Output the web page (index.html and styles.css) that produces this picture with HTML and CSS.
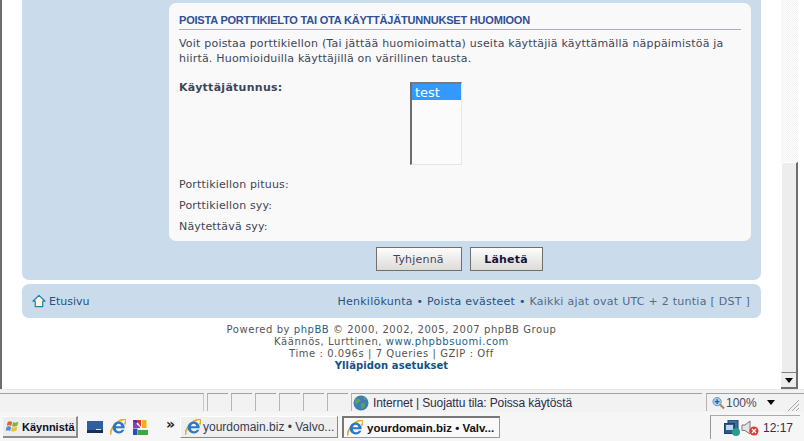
FILE: index.html
```html
<!DOCTYPE html>
<html lang="fi">
<head>
<meta charset="utf-8">
<title>Poista porttikielto</title>
<link rel="stylesheet" href="styles.css">
</head>
<body>
<svg class="defs" width="0" height="0" aria-hidden="true">
  <symbol id="ie" viewBox="1 1 16 16">
    <path d="M2 16.500C.8 15 2.500 10 6.500 6 10.500 2 15.500.3 16.600 1.600c.8 1 .2 3-1.200 5" fill="none" stroke="#e3ac2c" stroke-width="1.800"/>
    <path d="M9.600 3.600a6 6 0 0 1 6 6.600H6.900c.1 1.900 1.400 3 3 3 1.200 0 2.200-.5 2.900-1.500h2.600c-1 2.400-3 3.800-5.600 3.800A6 6 0 0 1 3.600 9.600a6 6 0 0 1 6-6zM7 8.300h5.300c-.1-1.500-1.200-2.500-2.600-2.500S7.200 6.800 7 8.300z" fill="#2a78cc" fill-rule="evenodd"/>
  </symbol>
</svg>
<div class="browser">
  <div class="viewport">
    <main class="page">
      <section class="panel">
        <form class="card">
          <h2 class="card-title">POISTA PORTTIKIELTO TAI OTA KÄYTTÄJÄTUNNUKSET HUOMIOON</h2>
          <p class="intro">Voit poistaa porttikiellon (Tai jättää huomioimatta) useita käyttäjiä käyttämällä näppäimistöä ja hiirtä. Huomioiduilla käyttäjillä on värillinen tausta.</p>
          <div class="user-row">
            <strong class="user-label">Käyttäjätunnus:</strong>
            <div class="listbox"><div class="option">test</div></div>
          </div>
          <div class="rows">
            <div class="row">Porttikiellon pituus:</div>
            <div class="row">Porttikiellon syy:</div>
            <div class="row">Näytettävä syy:</div>
          </div>
        </form>
        <div class="actions">
          <button type="button" class="btn btn-reset">Tyhjennä</button>
          <button type="button" class="btn btn-send">Lähetä</button>
        </div>
      </section>
      <nav class="navbar">
        <a class="home">
          <svg class="home-icon" viewBox="0 0 15 14"><path d="M7.500 1 14 7.200h-2.500V13h-8V7.200H1z" fill="#fbf3dc" stroke="#1f7fae" stroke-width="1.300" stroke-linejoin="round"/></svg>
          Etusivu
        </a>
        <div class="nav-links"><a>Henkilökunta</a> <b class="dot">•</b> <a>Poista evästeet</a> <b class="dot">•</b> <span class="tz">Kaikki ajat ovat UTC + 2 tuntia [ DST ]</span></div>
      </nav>
      <footer class="copy">
        <div>Powered by <a>phpBB</a> © 2000, 2002, 2005, 2007 phpBB Group</div>
        <div>Käännös, Lurttinen, <a>www.phpbbsuomi.com</a></div>
        <div>Time : 0.096s | 7 Queries | GZIP : Off</div>
        <div><a class="admin">Ylläpidon asetukset</a></div>
      </footer>
    </main>
    <div class="scrollbar">
      <div class="track"></div>
      <div class="thumb"></div>
      <div class="scroll-down"><span class="arrow"></span></div>
    </div>
  </div>
  <div class="status">
    <div class="cell cell-main"></div>
    <div class="cell cell-s"></div>
    <div class="cell cell-s"></div>
    <div class="cell cell-s"></div>
    <div class="cell cell-s"></div>
    <div class="cell cell-s"></div>
    <div class="cell cell-s"></div>
    <div class="cell cell-zone">
      <svg class="globe" viewBox="0 0 16 16"><circle cx="8" cy="8" r="7.500" fill="#3d7fb5"/><path d="M3 3.500c2 0 3 1 4.500 1 .5 1.500-1 2.500-2.500 3-1 .5-.5 2-2 2C1.500 8 1.500 5 3 3.500zM9 8c2 0 3.500.5 3 2.500-.3 1.500-2 3-3 3.500-.5-1.500-1.500-3-1-4.500.2-.8.500-1.500 1-1.500zM10 2c1.500.3 3 1.500 3.500 3-1 .2-2 0-3-1-.5-.5-.8-1.500-.5-2z" fill="#5fa35a"/></svg>
      <span class="zone-text">Internet | Suojattu tila: Poissa käytöstä</span>
    </div>
    <div class="cell cell-zoom">
      <svg class="magnifier" viewBox="0 0 14 14"><path d="M8 8l5 5" stroke="#b08a58" stroke-width="2.400"/><circle cx="5.500" cy="5.500" r="4.500" fill="#a9cdea" stroke="#6e93b5"/><path d="M5.500 3v5M3 5.500h5" stroke="#1f5fa8" stroke-width="1.400"/></svg>
      <span class="zoom-value">100%</span>
      <span class="arrow"></span>
    </div>
    <svg class="grip" viewBox="0 0 13 13"><path d="M12 1 1 12M12 5 5 12M12 9 9 12" stroke="#a8a8a8" fill="none"/></svg>
  </div>
  <div class="taskbar">
    <button type="button" class="start">
      <svg class="flag" viewBox="0 0 18 16"><path d="M3 3c2-1.500 3.500-1 5 0L7 7.500C5.500 6.500 4 6.300 2 7.500z" fill="#e2622b"/><path d="M9 3c2 1 3.500 1 6-.5L14 7c-2.500 1.500-4 1.500-6 .5z" fill="#7fb63a"/><path d="M1.800 8.500c2-1.200 3.500-1 5 0l-1 4.500c-1.500-1-3-1-5 0z" fill="#3f8fd8"/><path d="M7.800 8.500c2 1 3.500 1 6-.5l-1 4.500c-2.500 1.500-4 1.500-6 .5z" fill="#f0c030"/></svg>
      <span>Käynnistä</span>
    </button>
    <div class="quick">
      <svg class="ql" viewBox="0 0 16 14"><rect width="16" height="12" y="1" fill="#2f5f9f"/><rect y="10" width="16" height="3" fill="#16305c"/><rect x="9" y="9" width="5" height="1" fill="#dce6f2"/></svg>
      <svg class="ql"><use href="#ie"/></svg>
      <svg class="ql ql-pic" viewBox="0 0 15 15"><path d="M0 0h7l-7 7z" fill="#3a3ac0"/><path d="M0 1l7 6v1H0z" fill="#8a3fb5"/><path d="M3 0h5v7z" fill="#d8322a"/><rect x="9" y="0" width="4.500" height="8" fill="#f2b01e"/><rect x="5" y="10" width="10" height="5" fill="#3aa83a"/><rect y="8.500" width="4.500" height="6.500" fill="#2a4cc8"/></svg>
    </div>
    <span class="chevron">»</span>
    <div class="task"><svg class="task-ie"><use href="#ie"/></svg><span>yourdomain.biz • Valvo...</span></div>
    <div class="task task-active"><svg class="task-ie"><use href="#ie"/></svg><span>yourdomain.biz • Valv...</span></div>
    <div class="tray">
      <svg class="tray-net" viewBox="0 0 16 16"><rect x="4" y="0" width="10" height="9" fill="#3e6f9e" stroke="#1e3f66"/><rect x="0.500" y="3.500" width="10" height="10" fill="#2d5b8c" stroke="#1e3f66"/><rect x="2" y="5" width="7" height="5" fill="#bcd8f0"/><circle cx="12" cy="12" r="4" fill="#2a9d8f"/></svg>
      <svg class="tray-vol" viewBox="0 0 18 16"><path d="M1 5h3l5-4v13L4 10.500H1z" fill="#e4e4e4" stroke="#7b7b7b"/><circle cx="13" cy="11" r="4.500" fill="#df3b34"/><path d="M11 9l4 4M15 9l-4 4" stroke="#fff" stroke-width="1.300"/></svg>
      <span class="clock">12:17</span>
    </div>
  </div>
</div>
</body>
</html>
```

FILE: styles.css
```css
* { box-sizing: border-box; }
html, body { margin: 0; height: 100%; }
body { background: #fff; overflow: hidden; font-family: "DejaVu Sans", sans-serif; }
.defs { position: absolute; }
.browser { width: 804px; height: 441px; display: flex; flex-direction: column; }

.viewport { height: 389px; display: flex; border-left: 2px solid #6d6d6d; flex: none; }
.page { width: 759px; padding-left: 20px; flex: none; overflow: hidden; }
.panel { width: 739px; height: 280px; padding: 3px 10px 0 147px; background: #cadceb; border-radius: 0 0 7px 7px; }
.card { height: 238px; padding: 10px 10px 0; background: #f9f9f9; border-radius: 7px; color: #3d4658; font-size: 11px; }
.card-title { margin: 0; height: 17px; font: bold 11px/15px "Liberation Sans", sans-serif; letter-spacing: -0.2px; color: #2f4f96; border-bottom: 1px solid #a9acc4; }
.intro { margin: 6px 0 0; width: 560px; line-height: 15px; letter-spacing: 0.2px; }
.user-row { margin-top: 16px; display: grid; grid-template-columns: 231px 52px; }
.user-label { line-height: 11px; letter-spacing: 0.27px; color: #3d4658; }
.listbox { height: 83px; border: 1px solid #e6e6e6; border-top: 2px solid #7a7a7a; border-left: 2px solid #6d6d6d; background: #fbfbfb; }
.option { height: 16px; padding-top: 1px; line-height: 16px; padding-left: 3px; background: #3399ff; color: #fff; font-size: 13px; width: 49px; }
.rows { margin-top: 9px; letter-spacing: 0.16px; }
.row { height: 21px; line-height: 21px; }

.actions { display: flex; justify-content: center; gap: 8px; margin-top: 6px; padding-right: 2px; }
.btn { height: 24px; border: 1px solid #6f6f6f; background: linear-gradient(#fdfdfd, #dcdbd8); font: 11px "DejaVu Sans", sans-serif; letter-spacing: 0.2px; color: #3d4658; padding: 0; }
.btn-reset { width: 86px; }
.btn-send { width: 73px; font-weight: bold; color: #16163a; }

.navbar { margin-top: 4px; width: 739px; height: 34px; padding: 0 11px 0 10px; background: #cadceb; border-radius: 7px; display: flex; justify-content: space-between; align-items: center; font-size: 11px; color: #27517f; }
.home { display: flex; align-items: center; gap: 3px; }
.home-icon { width: 14px; height: 14px; }
.nav-links { letter-spacing: 0.26px; }
.dot { color: #27517f; font-weight: normal; }
.tz { color: #536a85; }

.copy { width: 739px; margin-top: 6px; text-align: center; font-size: 10px; line-height: 12px; letter-spacing: 0.55px; color: #555; }
.copy a { color: #1d5f85; }
.copy .admin { font-weight: bold; color: #105289; letter-spacing: 0.1px; }

.scrollbar { margin-left: 20px; width: 17px; display: flex; flex-direction: column; flex: none; }
.track { height: 162px; flex: none; background: repeating-conic-gradient(#f1f1f1 0 25%, #fff 0 50%) 0 0 / 2px 2px; }
.thumb { height: 211px; flex: none; background: #ededed; border: 1px solid #fff; border-right: 2px solid #6f6f6f; border-bottom: 1px solid #808080; }
.scroll-down { height: 16px; display: flex; align-items: center; justify-content: center; background: #ededed; border-right: 2px solid #6f6f6f; border-bottom: 2px solid #6f6f6f; }
.arrow { display: block; width: 0; height: 0; border: 4px solid transparent; border-top: 5px solid #000; border-bottom: 0; }

.status { height: 23px; flex: none; display: flex; padding: 3px 0 0; gap: 3px; background: #f2f2f2; position: relative; border-top: 1px solid #e8e8e8; font: 12px "Liberation Sans", sans-serif; color: #2d2d4a; }
.cell { height: 18px; border-top: 1px solid #a0a0a0; border-left: 1px solid #b5b5b5; background: #f2f2f2; display: flex; align-items: center; }
.cell-main { width: 204px; border-left: 0; border-right: 1px solid #c8c8c8; }
.cell-s { width: 21px; }
.cell-zone { width: 351px; gap: 4px; padding-left: 1px; }
.zone-text { letter-spacing: -0.12px; }
.globe { width: 16px; height: 16px; }
.cell-zoom { width: 98px; margin-left: 1px; padding-left: 5px; }
.magnifier { width: 13px; height: 14px; flex: none; }
.zoom-value { margin-left: 1px; width: 41px; color: #4a4a60; }
.grip { position: absolute; right: 4px; bottom: 0; width: 13px; height: 13px; }

.taskbar { flex: 1; display: flex; align-items: center; padding: 1px 4px 0 3px; background: #f6f6f6; font: 12px "Liberation Sans", sans-serif; color: #222; }
.start { width: 75px; height: 22px; flex: none; display: flex; align-items: center; gap: 1px; padding: 0 0 0 2px; border: 0; border-right: 2px solid #8d8d8d; border-bottom: 2px solid #8d8d8d; border-top: 1px solid #fff; background: #ededed; font: bold 11px "Liberation Sans", sans-serif; color: #0c0c1c; }
.flag { width: 16px; height: 15px; flex: none; }
.quick { margin-left: 9px; display: flex; gap: 7px; align-items: center; width: 79px; flex: none; }
.ql { width: 16px; height: 16px; flex: none; }
.ql-pic { width: 15px; height: 15px; }
.chevron { width: 14px; flex: none; font: bold 14px "DejaVu Sans", sans-serif; line-height: 14px; margin-top: -6px; }
.task { width: 158px; height: 22px; flex: none; margin-right: 4px; display: flex; align-items: center; gap: 2px; padding-left: 4px; border: 1px solid #fff; border-right-color: #888; border-bottom-color: #888; background: #efefef; white-space: nowrap; color: #3a3a50; }
.task-active { gap: 4px; padding-left: 3px; border: 1px solid #999; border-top: 2px solid #777; border-left: 2px solid #777; background: #f9f9f9; font-size: 11.500px; font-weight: bold; color: #111; }
.task-ie { width: 16px; height: 16px; flex: none; }
.tray { margin-left: auto; width: 90px; height: 24px; flex: none; display: flex; align-items: center; padding-left: 13px; border-left: 1px solid #999; border-top: 1px solid #aaa; }
.tray-net { width: 16px; height: 16px; flex: none; }
.tray-vol { width: 18px; height: 16px; flex: none; margin-left: 1px; }
.clock { margin-left: 4px; font: 12px "Liberation Sans", sans-serif; color: #303050; }
```
